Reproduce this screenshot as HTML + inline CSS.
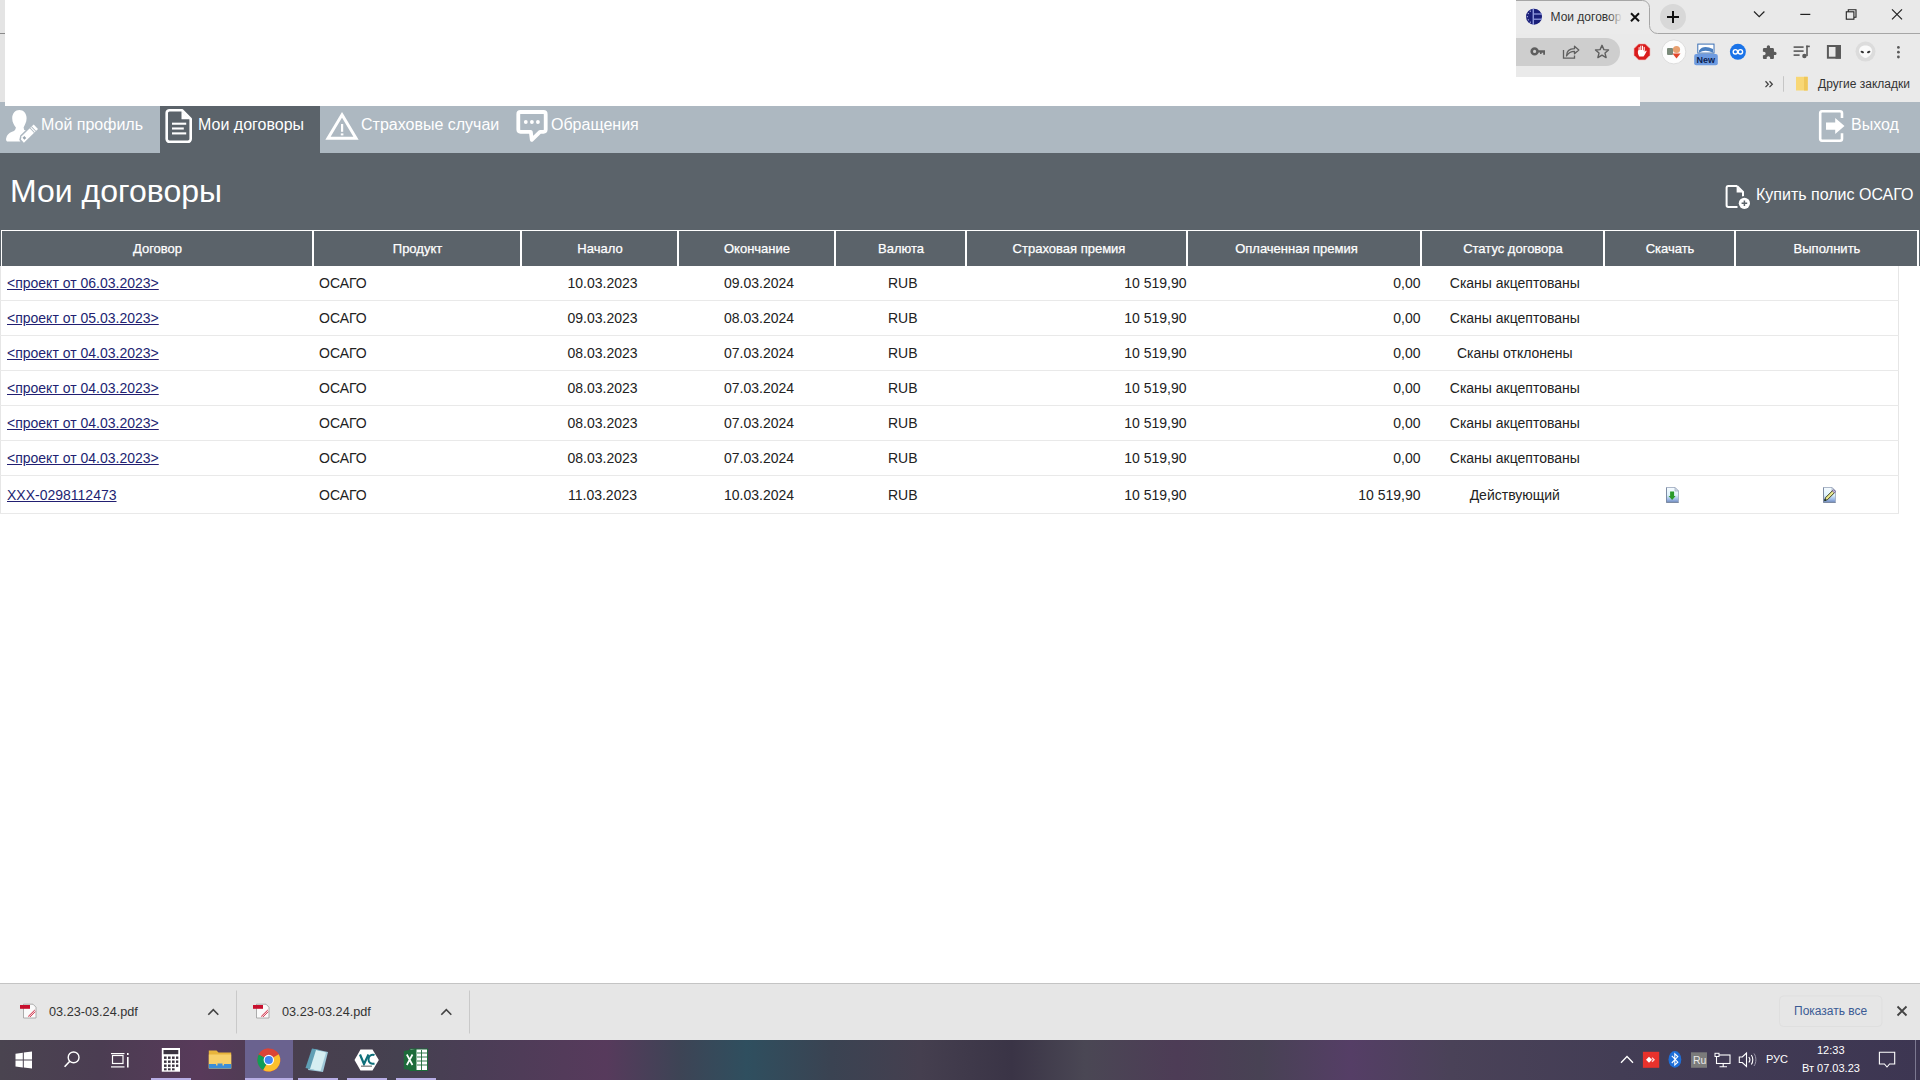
<!DOCTYPE html>
<html><head><meta charset="utf-8">
<style>
*{box-sizing:border-box}
html,body{margin:0;padding:0;width:1920px;height:1080px;overflow:hidden;background:#fff;font-family:"Liberation Sans",sans-serif}
.abs{position:absolute}
#leftstrip{left:0;top:0;width:5px;height:103px;background:#e4e4e4}
#leftstrip i{position:absolute;left:0;top:33px;width:5px;height:1px;background:#8a8a8a}
#chrome{left:1516px;top:0;width:404px;height:102px;background:#e8e8e8}
#nav{left:0;top:102px;width:1920px;height:51px;background:#adb8c1;color:#fff;font-size:16px}
#whitecover{left:5px;top:0;width:1511px;height:106px;background:#fff}
#whitebox{left:1516px;top:77px;width:124px;height:29px;background:#fff}
#hdr{left:0;top:153px;width:1920px;height:113px;background:#5b636a;color:#fff}
.navt{position:absolute;top:115px;height:20px;line-height:20px;font-size:16px;color:#fff;white-space:nowrap}
#tab-active{left:160px;top:106px;width:160px;height:47px;background:#5b636a}
#title{left:10px;top:171px;font-size:32px;line-height:40px;color:#fff;white-space:nowrap}
#buy{left:1724px;top:183px;font-size:16px;color:#fff;white-space:nowrap}
.th{position:absolute;top:231px;height:35px;line-height:35px;text-align:center;font-size:13px;color:#fff;white-space:nowrap;-webkit-text-stroke:0.25px #fff}
.td{position:absolute;font-size:14px;line-height:16px;color:#222;white-space:nowrap}
.td.c{text-align:center}.td.r{text-align:right}
.lnk{color:#221f72;text-decoration:underline}
#dl{left:0;top:983px;width:1920px;height:57px;background:#e6e6e6;border-top:1px solid #c9c9c9}
#task{left:0;top:1040px;width:1920px;height:40px;background:linear-gradient(90deg,#3d3245 0%,#4a3450 8%,#54385a 14%,#46385a 20%,#3b3a52 30%,#2f4658 38%,#34404f 45%,#3b3644 50%,#4a4654 56%,#4a3c56 62%,#4c3a5e 70%,#483e58 78%,#433d55 86%,#3f3954 100%)}
</style></head><body>
<div id="leftstrip" class="abs"><i></i></div>
<div id="nav" class="abs"></div>
<div id="whitecover" class="abs"></div>
<div class="abs" style="left:1516px;top:0;width:404px;height:102px;background:#e9e9e9;overflow:hidden">
<svg class="abs" style="left:0;top:0" width="404" height="102" viewBox="1516 0 404 102">
 <rect x="1516" y="34" width="404" height="68" fill="#eaeaea"/>
 <path d="M1516 0.5 H1642.5 A7 7 0 0 1 1649.5 7.5 V25.5 A8 8 0 0 0 1657.5 33.5 H1920 V34 H1516 Z" fill="#ebebeb"/>
 <path d="M1516 0.5 H1642.5 A7 7 0 0 1 1649.5 7.5 V25.5 A8 8 0 0 0 1657.5 33.5 H1920" fill="none" stroke="#a6a6a6" stroke-width="1"/>
 <!-- favicon -->
 <circle cx="1534" cy="16.7" r="8" fill="#1a1f7a"/>
 <rect x="1532.6" y="8.5" width="1.3" height="16.5" fill="#9aa4e6"/>
 <rect x="1534" y="13.4" width="8" height="1.2" fill="#9aa4e6"/>
 <rect x="1534" y="18.6" width="8" height="1.2" fill="#9aa4e6"/>
 <g fill="#c8ccf0"><circle cx="1528.3" cy="13.6" r="0.6"/><circle cx="1527.3" cy="16.7" r="0.6"/><circle cx="1528.3" cy="19.8" r="0.6"/><circle cx="1530.3" cy="22.2" r="0.6"/><circle cx="1530.3" cy="11.2" r="0.6"/></g>
 <!-- tab close -->
 <path d="M1631 13.2 L1639 21.2 M1639 13.2 L1631 21.2" stroke="#111" stroke-width="2"/>
 <!-- new tab button -->
 <circle cx="1673" cy="17" r="13" fill="#d8d8d8"/>
 <path d="M1667 17 H1679 M1673 11 V23" stroke="#111" stroke-width="2"/>
 <!-- window controls -->
 <path d="M1754 11.5 L1759.2 16.7 L1764.4 11.5" fill="none" stroke="#222" stroke-width="1.2"/>
 <rect x="1800.3" y="13.8" width="10" height="1.2" fill="#222"/>
 <rect x="1846.3" y="11.8" width="7.6" height="7.4" fill="none" stroke="#222" stroke-width="1.1"/>
 <path d="M1848.3 11.8 V9.7 H1856 V17.2 H1853.9" fill="none" stroke="#222" stroke-width="1.1"/>
 <path d="M1892 9.3 L1902 19.3 M1902 9.3 L1892 19.3" stroke="#222" stroke-width="1.2"/>
 <!-- address pill -->
 <path d="M1516 38 H1606 A14 14 0 0 1 1606 66 H1516 Z" fill="#cecece"/>
 <!-- key -->
 <circle cx="1534.6" cy="51.4" r="2.9" fill="none" stroke="#5f5f5f" stroke-width="2.6"/>
 <path d="M1537 50.2 H1545 V54.8 H1543.2 V52.8 H1541.6 V54 H1540 V52.6 H1537 Z" fill="#5f5f5f"/>
 <!-- share -->
 <path d="M1563.5 50 V58.2 H1574.5 V55.5" fill="none" stroke="#5f5f5f" stroke-width="1.3"/>
 <path d="M1566.5 56 C1566.5 51 1570 48.7 1574.5 48.7 V46.2 L1578.8 50 L1574.5 53.8 V51.3 C1571 51.3 1568.5 52.5 1566.5 56 Z" fill="none" stroke="#5f5f5f" stroke-width="1.3" stroke-linejoin="round"/>
 <!-- star -->
 <path d="M1602 45.3 L1603.9 49.6 L1608.5 50 L1605 53.1 L1606.1 57.6 L1602 55.2 L1597.9 57.6 L1599 53.1 L1595.5 50 L1600.1 49.6 Z" fill="none" stroke="#5f5f5f" stroke-width="1.4" stroke-linejoin="round"/>
 <!-- adblock octagon -->
 <path d="M1638.7 43.9 H1645.3 L1650 48.6 V55.2 L1645.3 59.9 H1638.7 L1634 55.2 V48.6 Z" fill="#d91c1c" stroke="#f3b0b0" stroke-width="0.6"/>
 <path d="M1639.3 56.5 C1638 54.5 1637.6 52.5 1638 50.5 L1638.6 50.2 V47.2 L1639.6 47 V50 L1640.3 50 V45.8 L1641.3 45.6 V50 L1642 50 V45.7 L1643 45.8 V50.2 L1643.7 50.3 V46.8 L1644.7 47 V52 L1646 50.5 L1646.7 51 C1645.5 53.5 1644.5 55.5 1643.5 56.5 Z" fill="#fff"/>
 <!-- white circle ext -->
 <circle cx="1673.8" cy="51.9" r="12" fill="#fdfdfd"/>
 <circle cx="1673.8" cy="51.9" r="12" fill="none" stroke="#d6d6d6" stroke-width="0.8"/>
 <rect x="1667" y="48" width="6" height="7" rx="1" fill="#7a8a7a"/>
 <circle cx="1676.5" cy="49.5" r="3.6" fill="#e8a070"/>
 <path d="M1672.5 53.5 H1680.5 L1676.5 58.5 Z" fill="#e2452a"/>
 <!-- New badge ext -->
 <rect x="1697.8" y="44.1" width="16.2" height="9" fill="#fff" stroke="#3a6fb5" stroke-width="1"/>
 <path d="M1699 50.5 C1702 46 1707 46 1713 49 V52.8 C1708 50 1703 50 1699 52.8 Z" fill="#4a7fc0"/>
 <rect x="1694.2" y="54" width="23.6" height="11.3" rx="2" fill="#6e9be0"/>
 <!-- blue infinity -->
 <circle cx="1737.9" cy="51.8" r="8" fill="#1a73e8"/>
 <circle cx="1735.4" cy="51.8" r="2.2" fill="none" stroke="#fff" stroke-width="1.4"/>
 <circle cx="1740.4" cy="51.8" r="2.2" fill="none" stroke="#fff" stroke-width="1.4"/>
 <!-- puzzle -->
 <path transform="translate(1761.6 44.7) scale(0.65)" d="M20.5 11H19V7c0-1.1-.9-2-2-2h-4V3.5C13 2.12 11.88 1 10.5 1S8 2.12 8 3.5V5H4c-1.1 0-1.99.9-1.99 2v3.8H3.5c1.49 0 2.7 1.21 2.7 2.7s-1.21 2.7-2.7 2.7H2V20c0 1.1.9 2 2 2h3.8v-1.5c0-1.490 1.21-2.7 2.7-2.7 1.49 0 2.7 1.21 2.7 2.7V22H17c1.1 0 2-.9 2-2v-4h1.5c1.38 0 2.5-1.12 2.5-2.5S21.88 11 20.5 11z" fill="#5a5a5a"/>
 <!-- playlist -->
 <g fill="#5a5a5a">
  <rect x="1793.6" y="46.3" width="10" height="1.6"/>
  <rect x="1793.6" y="50.3" width="10" height="1.6"/>
  <rect x="1793.6" y="54.3" width="6" height="1.6"/>
  <rect x="1806.2" y="45.6" width="1.6" height="10.5"/>
  <rect x="1806.2" y="45.6" width="3.6" height="1.6"/>
  <circle cx="1804.4" cy="56" r="2.2"/>
 </g>
 <!-- side panel -->
 <rect x="1827.9" y="46" width="12" height="11.7" fill="none" stroke="#5a5a5a" stroke-width="2"/>
 <rect x="1835.5" y="45" width="5.4" height="13.7" fill="#5a5a5a"/>
 <!-- alien avatar -->
 <circle cx="1865.5" cy="51.6" r="10" fill="#dcdcdc"/>
 <path d="M1865.5 45.5 C1870 45.5 1872 48 1872 51 C1872 54.5 1868 57.5 1865.5 58 C1863 57.5 1859 54.5 1859 51 C1859 48 1861 45.5 1865.5 45.5 Z" fill="#fafafa"/>
 <ellipse cx="1862.3" cy="52" rx="1.8" ry="1" fill="#333" transform="rotate(20 1862.3 52)"/>
 <ellipse cx="1868.7" cy="52" rx="1.8" ry="1" fill="#333" transform="rotate(-20 1868.7 52)"/>
 <!-- kebab -->
 <g fill="#5a5a5a"><circle cx="1898.4" cy="47.4" r="1.4"/><circle cx="1898.4" cy="52.2" r="1.4"/><circle cx="1898.4" cy="57" r="1.4"/></g>
 <!-- bookmarks bar -->
 <path d="M1765.5 81.3 L1768.3 84.2 L1765.5 87.1 M1769.5 81.3 L1772.3 84.2 L1769.5 87.1" fill="none" stroke="#444" stroke-width="1.3"/>
 <rect x="1783" y="76.2" width="1" height="15.5" fill="#c6c6c6"/>
 <rect x="1796" y="76.8" width="11.7" height="13.7" fill="#f8d775"/>
 <rect x="1804" y="76.8" width="3.7" height="13.7" fill="#efc75a"/>
</svg>
<div class="abs" style="left:34.5px;top:9px;font-size:12px;line-height:16px;color:#333;white-space:nowrap;width:72px;overflow:hidden">Мои договоры</div>
<div class="abs" style="left:92px;top:9px;width:16px;height:16px;background:linear-gradient(90deg,rgba(235,235,235,0),#ebebeb 90%)"></div>
<div class="abs" style="left:180.5px;top:55px;font-size:9px;font-weight:bold;line-height:11px;color:#0c1e50;white-space:nowrap">New</div>
<div class="abs" style="left:302px;top:76px;font-size:12px;line-height:16px;color:#333;white-space:nowrap">Другие закладки</div>
</div>
<div class="abs" style="left:1516px;top:77px;width:124px;height:29px;background:#fff"></div>

<div id="tab-active" class="abs"></div>
<div id="hdr" class="abs"></div>
<div id="title" class="abs">Мои договоры</div>
<div class="navt" style="left:41px">Мой профиль</div>
<div class="navt" style="left:198px">Мои договоры</div>
<div class="navt" style="left:361px">Страховые случаи</div>
<div class="navt" style="left:551px">Обращения</div>
<div class="navt" style="left:1851px">Выход</div>
<div class="abs" style="left:1756px;top:185px;font-size:16px;line-height:20px;color:#fff;white-space:nowrap">Купить полис ОСАГО</div>
<svg class="abs" style="left:0;top:0" width="1920" height="230" viewBox="0 0 1920 230">
 <!-- person -->
 <path fill="#fff" d="M19.4 110 C23.5 110 26.6 113.5 26.6 118.2 C26.6 122.5 24.5 125 23.6 127.5 L24.2 130 C27 130.5 29 131 31 132.5 L20 141.6 L8 141.6 C6.5 141.6 5.8 140.5 6.1 138.5 C6.8 135 9 133 12 131.8 C14 131 15.5 130.5 15.9 127.5 C14.2 125 12.2 122.5 12.2 118.2 C12.2 113.5 15.3 110 19.4 110 Z"/>
 <g transform="translate(21.6 140.6) rotate(-44)">
  <path d="M0.2 -1.2 L3 -3.1 H19.8 V3.1 H0.2 Z" fill="#fff" stroke="#adb8c1" stroke-width="3" paint-order="stroke"/>
  <rect x="14.3" y="-3.2" width="0.9" height="6.4" fill="#adb8c1"/>
  <rect x="16.3" y="-3.2" width="0.9" height="6.4" fill="#adb8c1"/>
  <rect x="2.6" y="-1.3" width="2.6" height="2.6" fill="#9aa6b0"/>
 </g>
 <!-- document (active) -->
 <path d="M169.5 110.2 H182 L190.7 118.8 V139 A2.8 2.8 0 0 1 187.9 141.8 H169.5 A2.8 2.8 0 0 1 166.7 139 V113 A2.8 2.8 0 0 1 169.5 110.2 Z" fill="none" stroke="#fff" stroke-width="2.6" stroke-linejoin="round"/>
 <path d="M181.5 111 V119.3 H190" fill="#fff"/>
 <g stroke="#fff" stroke-width="2.1">
  <line x1="172" y1="123.7" x2="186.2" y2="123.7"/>
  <line x1="172" y1="128.5" x2="183.8" y2="128.5"/>
  <line x1="172" y1="133.4" x2="186.2" y2="133.4"/>
 </g>
 <!-- warning -->
 <path d="M342 114.8 L356 138.2 H328 Z" fill="none" stroke="#fff" stroke-width="3" stroke-linejoin="miter"/>
 <rect x="341" y="124" width="2.2" height="7.8" fill="#fff"/>
 <rect x="340.8" y="133.4" width="2.6" height="2" fill="#fff"/>
 <!-- chat -->
 <path d="M520.5 112 H543.5 A2.2 2.2 0 0 1 545.7 114.2 V129.6 A2.2 2.2 0 0 1 543.5 131.8 H540 L531.8 139.8 L530.8 131.8 H520.5 A2.2 2.2 0 0 1 518.3 129.6 V114.2 A2.2 2.2 0 0 1 520.5 112 Z" fill="none" stroke="#fff" stroke-width="3.8" stroke-linejoin="round"/>
 <circle cx="525.8" cy="122" r="1.9" fill="#fff"/>
 <circle cx="531.9" cy="122" r="1.9" fill="#fff"/>
 <circle cx="537.9" cy="122" r="1.9" fill="#fff"/>
 <!-- exit -->
 <path d="M1842 118 V113.2 A2 2 0 0 0 1840 111.2 H1822 A2 2 0 0 0 1820.2 113.2 V138.8 A2 2 0 0 0 1822 140.8 H1840 A2 2 0 0 0 1842 138.8 V133.2" fill="none" stroke="#fff" stroke-width="2.6"/>
 <path d="M1826 122.5 H1835.2 V117.9 L1844.5 126 L1835.2 134 V129.7 H1826 Z" fill="#fff"/>
 <!-- buy doc -->
 <path d="M1737 186 H1728.3 A1.8 1.8 0 0 0 1726.6 187.8 V205.2 A1.8 1.8 0 0 0 1728.3 207 H1737.5 M1743 198 V192 L1737 186" fill="none" stroke="#fff" stroke-width="2"/>
 <path d="M1736.6 186.5 V192.6 H1742.8 Z" fill="#fff"/>
 <circle cx="1744.4" cy="203.3" r="7.2" fill="#5b636a"/>
 <circle cx="1744.4" cy="203.3" r="5.6" fill="#fff"/>
 <path d="M1744.4 200.5 V206.1 M1741.6 203.3 H1747.2" stroke="#5b636a" stroke-width="1.5"/>
</svg>

<div class="abs" style="left:1px;top:230px;width:1917px;height:1px;background:#fff"></div>
<div class="abs" style="left:1px;top:230px;width:1px;height:36px;background:#fff"></div>
<div class="abs" style="left:312px;top:230px;width:2px;height:36px;background:#fff"></div>
<div class="abs" style="left:520px;top:230px;width:2px;height:36px;background:#fff"></div>
<div class="abs" style="left:677px;top:230px;width:2px;height:36px;background:#fff"></div>
<div class="abs" style="left:834px;top:230px;width:2px;height:36px;background:#fff"></div>
<div class="abs" style="left:965px;top:230px;width:2px;height:36px;background:#fff"></div>
<div class="abs" style="left:1186px;top:230px;width:2px;height:36px;background:#fff"></div>
<div class="abs" style="left:1420px;top:230px;width:2px;height:36px;background:#fff"></div>
<div class="abs" style="left:1603px;top:230px;width:2px;height:36px;background:#fff"></div>
<div class="abs" style="left:1734px;top:230px;width:2px;height:36px;background:#fff"></div>
<div class="abs" style="left:1917px;top:230px;width:2px;height:36px;background:#fff"></div>
<div class="th" style="left:2px;width:311px">Договор</div>
<div class="th" style="left:314px;width:207px">Продукт</div>
<div class="th" style="left:522px;width:156px">Начало</div>
<div class="th" style="left:679px;width:156px">Окончание</div>
<div class="th" style="left:836px;width:130px">Валюта</div>
<div class="th" style="left:959px;width:220px">Страховая премия</div>
<div class="th" style="left:1180px;width:233px">Оплаченная премия</div>
<div class="th" style="left:1422px;width:182px">Статус договора</div>
<div class="th" style="left:1605px;width:130px">Скачать</div>
<div class="th" style="left:1736px;width:182px">Выполнить</div>
<div class="abs" style="left:0px;top:266px;width:1px;height:248px;background:#e6e6e6"></div>
<div class="abs" style="left:1898px;top:266px;width:1px;height:248px;background:#e6e6e6"></div>
<div class="abs" style="left:0px;top:300px;width:1899px;height:1px;background:#e9e9e9"></div>
<div class="abs" style="left:0px;top:335px;width:1899px;height:1px;background:#e9e9e9"></div>
<div class="abs" style="left:0px;top:370px;width:1899px;height:1px;background:#e9e9e9"></div>
<div class="abs" style="left:0px;top:405px;width:1899px;height:1px;background:#e9e9e9"></div>
<div class="abs" style="left:0px;top:440px;width:1899px;height:1px;background:#e9e9e9"></div>
<div class="abs" style="left:0px;top:475px;width:1899px;height:1px;background:#e9e9e9"></div>
<div class="abs" style="left:0px;top:513px;width:1899px;height:1px;background:#e9e9e9"></div>
<div class="td lnk" style="top:275px;left:7px">&lt;проект от 06.03.2023&gt;</div>
<div class="td" style="top:275px;left:319px">ОСАГО</div>
<div class="td c" style="top:275px;left:542.5px;width:120px">10.03.2023</div>
<div class="td c" style="top:275px;left:699px;width:120px">09.03.2024</div>
<div class="td c" style="top:275px;left:842.7px;width:120px">RUB</div>
<div class="td r" style="top:275px;left:1026.5px;width:160px">10 519,90</div>
<div class="td r" style="top:275px;left:1260.5px;width:160px">0,00</div>
<div class="td c" style="top:275px;left:1414.8px;width:200px">Сканы акцептованы</div>
<div class="td lnk" style="top:310px;left:7px">&lt;проект от 05.03.2023&gt;</div>
<div class="td" style="top:310px;left:319px">ОСАГО</div>
<div class="td c" style="top:310px;left:542.5px;width:120px">09.03.2023</div>
<div class="td c" style="top:310px;left:699px;width:120px">08.03.2024</div>
<div class="td c" style="top:310px;left:842.7px;width:120px">RUB</div>
<div class="td r" style="top:310px;left:1026.5px;width:160px">10 519,90</div>
<div class="td r" style="top:310px;left:1260.5px;width:160px">0,00</div>
<div class="td c" style="top:310px;left:1414.8px;width:200px">Сканы акцептованы</div>
<div class="td lnk" style="top:345px;left:7px">&lt;проект от 04.03.2023&gt;</div>
<div class="td" style="top:345px;left:319px">ОСАГО</div>
<div class="td c" style="top:345px;left:542.5px;width:120px">08.03.2023</div>
<div class="td c" style="top:345px;left:699px;width:120px">07.03.2024</div>
<div class="td c" style="top:345px;left:842.7px;width:120px">RUB</div>
<div class="td r" style="top:345px;left:1026.5px;width:160px">10 519,90</div>
<div class="td r" style="top:345px;left:1260.5px;width:160px">0,00</div>
<div class="td c" style="top:345px;left:1414.8px;width:200px">Сканы отклонены</div>
<div class="td lnk" style="top:380px;left:7px">&lt;проект от 04.03.2023&gt;</div>
<div class="td" style="top:380px;left:319px">ОСАГО</div>
<div class="td c" style="top:380px;left:542.5px;width:120px">08.03.2023</div>
<div class="td c" style="top:380px;left:699px;width:120px">07.03.2024</div>
<div class="td c" style="top:380px;left:842.7px;width:120px">RUB</div>
<div class="td r" style="top:380px;left:1026.5px;width:160px">10 519,90</div>
<div class="td r" style="top:380px;left:1260.5px;width:160px">0,00</div>
<div class="td c" style="top:380px;left:1414.8px;width:200px">Сканы акцептованы</div>
<div class="td lnk" style="top:415px;left:7px">&lt;проект от 04.03.2023&gt;</div>
<div class="td" style="top:415px;left:319px">ОСАГО</div>
<div class="td c" style="top:415px;left:542.5px;width:120px">08.03.2023</div>
<div class="td c" style="top:415px;left:699px;width:120px">07.03.2024</div>
<div class="td c" style="top:415px;left:842.7px;width:120px">RUB</div>
<div class="td r" style="top:415px;left:1026.5px;width:160px">10 519,90</div>
<div class="td r" style="top:415px;left:1260.5px;width:160px">0,00</div>
<div class="td c" style="top:415px;left:1414.8px;width:200px">Сканы акцептованы</div>
<div class="td lnk" style="top:450px;left:7px">&lt;проект от 04.03.2023&gt;</div>
<div class="td" style="top:450px;left:319px">ОСАГО</div>
<div class="td c" style="top:450px;left:542.5px;width:120px">08.03.2023</div>
<div class="td c" style="top:450px;left:699px;width:120px">07.03.2024</div>
<div class="td c" style="top:450px;left:842.7px;width:120px">RUB</div>
<div class="td r" style="top:450px;left:1026.5px;width:160px">10 519,90</div>
<div class="td r" style="top:450px;left:1260.5px;width:160px">0,00</div>
<div class="td c" style="top:450px;left:1414.8px;width:200px">Сканы акцептованы</div>
<div class="td lnk" style="top:487px;left:7px">XXX-0298112473</div>
<div class="td" style="top:487px;left:319px">ОСАГО</div>
<div class="td c" style="top:487px;left:542.5px;width:120px">11.03.2023</div>
<div class="td c" style="top:487px;left:699px;width:120px">10.03.2024</div>
<div class="td c" style="top:487px;left:842.7px;width:120px">RUB</div>
<div class="td r" style="top:487px;left:1026.5px;width:160px">10 519,90</div>
<div class="td r" style="top:487px;left:1260.5px;width:160px">10 519,90</div>
<div class="td c" style="top:487px;left:1414.8px;width:200px">Действующий</div>
<svg class="abs" style="left:1666px;top:487px" width="13" height="16" viewBox="0 0 13 16"><defs><linearGradient id="pg1" x1="0" y1="0" x2="0" y2="1"><stop offset="0" stop-color="#f6fbff"/><stop offset="0.5" stop-color="#dff3fb"/><stop offset="0.8" stop-color="#9cb8e6"/><stop offset="1" stop-color="#6f88b8"/></linearGradient></defs><path d="M0.5 0.5H9L12.5 4V15.5H0.5Z" fill="url(#pg1)" stroke="#a4b0c4" stroke-width="0.9"/><path d="M0.5 0.5V15.5H12.5" fill="none" stroke="#7d8ba3" stroke-width="1"/><path d="M9 0.5V4H12.5Z" fill="#d6dfea" stroke="#9eabbd" stroke-width="0.7"/><path d="M4.1 4.6H8.1V9H9.6L6.1 13L2.6 9H4.1Z" fill="#2a9a2a"/></svg>
<svg class="abs" style="left:1823px;top:487px" width="13" height="16" viewBox="0 0 13 16"><defs><linearGradient id="pg2" x1="0" y1="0" x2="0" y2="1"><stop offset="0" stop-color="#f6fbff"/><stop offset="0.5" stop-color="#dff3fb"/><stop offset="0.8" stop-color="#9cb8e6"/><stop offset="1" stop-color="#6f88b8"/></linearGradient></defs><path d="M0.5 0.5H9L12.5 4V15.5H0.5Z" fill="url(#pg2)" stroke="#a4b0c4" stroke-width="0.9"/><path d="M0.5 0.5V15.5H12.5" fill="none" stroke="#7d8ba3" stroke-width="1"/><path d="M9 0.5V4H12.5Z" fill="#d6dfea" stroke="#9eabbd" stroke-width="0.7"/><path d="M1.6 13.6L2.6 10.6L9.6 3.6L11.6 5.6L4.6 12.6Z" fill="#e8e890" stroke="#2a2a10" stroke-width="0.9"/><path d="M9.3 3.9L10.6 2.6L12.6 4.6L11.3 5.9Z" fill="#c8b8e0" stroke="#6a5a8a" stroke-width="0.7"/><circle cx="2.2" cy="13" r="0.9" fill="#1a3a2a"/></svg>
<svg class="abs" style="left:0;top:983px" width="1920" height="57" viewBox="0 983 1920 57">
 <rect x="0" y="983" width="1920" height="57" fill="#e6e6e6"/>
 <rect x="0" y="983" width="1920" height="1" fill="#c4c4c4"/>
 <g id="pdf1">
  <path d="M23.5 1004.2 H33 L36 1007.2 V1018 H23.5 Z" fill="#fafafa" stroke="#9a9a9a" stroke-width="0.8"/>
  <rect x="20" y="1005" width="10" height="3.8" fill="#c8102e"/>
  <path d="M28.2 1016.5 L34.8 1010 M29.8 1017 L35.2 1011.6" stroke="#d0203a" stroke-width="1"/>
 </g>
 <use href="#pdf1" x="233"/>
 <path d="M208.3 1014.8 L213.3 1009.6 L218.3 1014.8" fill="none" stroke="#444" stroke-width="1.6"/>
 <path d="M441.3 1014.8 L446.3 1009.6 L451.3 1014.8" fill="none" stroke="#444" stroke-width="1.6"/>
 <rect x="236" y="990.5" width="1" height="43" fill="#c9c9c9"/>
 <rect x="469" y="990.5" width="1" height="43" fill="#c9c9c9"/>
 <rect x="1779.5" y="996" width="102.5" height="30.5" rx="4" fill="none" stroke="#dfdfdf" stroke-width="1"/>
 <path d="M1897.5 1006.5 L1906.5 1015.5 M1906.5 1006.5 L1897.5 1015.5" stroke="#444" stroke-width="1.8"/>
</svg>
<div class="abs" style="left:49px;top:1004px;font-size:12.7px;line-height:16px;color:#333;white-space:nowrap">03.23-03.24.pdf</div>
<div class="abs" style="left:282px;top:1004px;font-size:12.7px;line-height:16px;color:#333;white-space:nowrap">03.23-03.24.pdf</div>
<div class="abs" style="left:1794px;top:1003px;font-size:12px;line-height:16px;color:#3b5b94;white-space:nowrap">Показать все</div>
<svg class="abs" style="left:0;top:1040px" width="1920" height="40" viewBox="0 1040 1920 40">
 <defs>
  <linearGradient id="tb" x1="0" x2="1" y1="0" y2="0">
   <stop offset="0.0000" stop-color="#4a4450"/>
   <stop offset="0.0521" stop-color="#4b3d52"/>
   <stop offset="0.1042" stop-color="#583a5a"/>
   <stop offset="0.1562" stop-color="#483f4e"/>
   <stop offset="0.2083" stop-color="#454150"/>
   <stop offset="0.2500" stop-color="#4b3d56"/>
   <stop offset="0.3156" stop-color="#573a5c"/>
   <stop offset="0.3542" stop-color="#3d4455"/>
   <stop offset="0.3891" stop-color="#2f4f5f"/>
   <stop offset="0.4323" stop-color="#3a4352"/>
   <stop offset="0.4792" stop-color="#453f4f"/>
   <stop offset="0.5271" stop-color="#3a3446"/>
   <stop offset="0.5651" stop-color="#4a4754"/>
   <stop offset="0.6130" stop-color="#4d3c56"/>
   <stop offset="0.6562" stop-color="#484254"/>
   <stop offset="0.7031" stop-color="#553e66"/>
   <stop offset="0.7552" stop-color="#4a4258"/>
   <stop offset="0.8438" stop-color="#433d55"/>
   <stop offset="1.0000" stop-color="#3d3652"/>
  </linearGradient>
 </defs>
 <rect x="0" y="1040" width="1920" height="40" fill="url(#tb)"/>
 <!-- chrome active -->
 <rect x="245" y="1040" width="48" height="40" fill="#6a628f"/>
 <g fill="#b8aee6">
  <rect x="151" y="1078" width="40" height="2"/>
  <rect x="245" y="1078" width="48" height="2"/>
  <rect x="298" y="1078" width="40" height="2"/>
  <rect x="347" y="1078" width="40" height="2"/>
  <rect x="396" y="1078" width="40" height="2"/>
 </g>
 <!-- windows logo -->
 <g fill="#fff">
  <path d="M15.5 1053.8 L22.8 1052.8 V1059.6 H15.5 Z"/>
  <path d="M23.8 1052.6 L32 1051.6 V1059.6 H23.8 Z"/>
  <path d="M15.5 1060.6 H22.8 V1067.4 L15.5 1066.4 Z"/>
  <path d="M23.8 1060.6 H32 V1068.6 L23.8 1067.6 Z"/>
 </g>
 <!-- search -->
 <circle cx="73.6" cy="1057.4" r="5.4" fill="none" stroke="#fff" stroke-width="1.4"/>
 <path d="M69.8 1061.3 L64.6 1066.8" stroke="#fff" stroke-width="1.6"/>
 <!-- task view -->
 <g fill="none" stroke="#fff" stroke-width="1.2">
  <rect x="112.5" y="1055.5" width="10.5" height="8"/>
 </g>
 <g fill="#fff">
  <rect x="111" y="1053" width="13.5" height="1.2"/>
  <rect x="111" y="1066.3" width="13.5" height="1.2"/>
  <rect x="127" y="1053" width="1.6" height="2"/>
  <rect x="127" y="1057" width="1.6" height="10.5"/>
 </g>
 <!-- calculator -->
 <rect x="161.8" y="1048" width="18.2" height="23.7" fill="#fff"/>
 <rect x="163.5" y="1050" width="14.8" height="4.2" fill="#3a3340"/>
 <g fill="#3a3340">
  <rect x="164" y="1056.5" width="2.6" height="2.4"/><rect x="168" y="1056.5" width="2.6" height="2.4"/><rect x="172" y="1056.5" width="2.6" height="2.4"/><rect x="176" y="1056.5" width="2.3" height="2.4"/>
  <rect x="164" y="1060.5" width="2.6" height="2.4"/><rect x="168" y="1060.5" width="2.6" height="2.4"/><rect x="172" y="1060.5" width="2.6" height="2.4"/><rect x="176" y="1060.5" width="2.3" height="2.4"/>
  <rect x="164" y="1064.5" width="2.6" height="2.4"/><rect x="168" y="1064.5" width="2.6" height="2.4"/><rect x="172" y="1064.5" width="2.6" height="2.4"/><rect x="176" y="1064.5" width="2.3" height="2.4"/>
  <rect x="164" y="1068.3" width="2.6" height="2"/><rect x="168" y="1068.3" width="2.6" height="2"/><rect x="172" y="1068.3" width="2.6" height="2"/>
 </g>
 <!-- folder -->
 <path d="M208.8 1050.5 H216.5 L218.5 1052.5 H231.2 V1068.5 H208.8 Z" fill="#e8b43c"/>
 <rect x="208.8" y="1054.5" width="22.4" height="14" fill="#f8d06a"/>
 <path d="M208.8 1064 H231.2 V1068.5 H208.8 Z" fill="#3c8ed8"/>
 <rect x="216" y="1061.5" width="8" height="4" fill="#f8d06a"/>
 <rect x="217.5" y="1063.5" width="5" height="3" fill="#3c8ed8"/>
 <!-- chrome logo -->
 <circle cx="268.8" cy="1060" r="11.5" fill="#db4437"/>
 <path d="M268.8 1060 L278.76 1054.25 A11.5 11.5 0 0 1 263.05 1069.96 Z" fill="#fbc02d"/>
 <path d="M268.8 1060 L263.05 1069.96 A11.5 11.5 0 0 1 258.84 1054.25 Z" fill="#0f9d58"/>
 <path d="M268.8 1060 L258.84 1054.25 A11.5 11.5 0 0 1 268.8 1048.5 Z" fill="#db4437"/>
 <circle cx="268.8" cy="1060" r="5.2" fill="#fff"/>
 <circle cx="268.8" cy="1060" r="4.1" fill="#4285f4"/>
 <!-- notepad-ish -->
 <path d="M308 1070 L314 1049 L328 1052 L323 1072 Z" fill="#9fc8d8"/>
 <path d="M305.5 1068 L312 1048.5 L320 1050 L314 1070 Z" fill="#5f9fb5"/>
 <path d="M310 1069 L316 1050 L326 1052.5 L320.5 1071 Z" fill="#d5eef2"/>
 <!-- VC -->
 <path d="M360.5 1049.5 H372.5 L378.8 1060 L372.5 1070.5 H360.5 L354.5 1060 Z" fill="#fff"/>
 <path d="M360 1054.5 L364 1064 L368.5 1054.5" fill="none" stroke="#0f6f7a" stroke-width="2.2"/>
 <path d="M374.5 1055 C371.5 1053.8 368.5 1056 368.5 1059.5 C368.5 1063 371.5 1064.5 374.5 1063.5" fill="none" stroke="#0f6f7a" stroke-width="2"/>
 <rect x="361" y="1065.5" width="11" height="1.4" fill="#888"/>
 <!-- excel -->
 <rect x="410" y="1049" width="17.5" height="21.5" fill="#fff" stroke="#1d6b3a" stroke-width="1"/>
 <g stroke="#1d6b3a" stroke-width="0.9"><path d="M417 1053 H427 M417 1057 H427 M417 1061 H427 M417 1065 H427 M421.5 1050 V1070"/></g>
 <path d="M403.8 1051 L416.5 1048.8 V1071 L403.8 1069 Z" fill="#1d6b3a"/>
 <path d="M406.8 1054.5 L412.5 1065 M412.5 1054.5 L406.8 1065" stroke="#fff" stroke-width="1.7"/>
 <!-- tray -->
 <path d="M1621 1062.8 L1627 1056.5 L1633 1062.8" fill="none" stroke="#fff" stroke-width="1.3"/>
 <rect x="1642.9" y="1051.8" width="16.3" height="16" fill="#e8322c"/>
 <path d="M1646 1059.8 L1649 1056.8 L1652 1059.8 L1649 1062.8 Z" fill="#fff"/>
 <path d="M1652.5 1057.3 L1655 1059.8 L1652.5 1062.3 L1651.5 1061.3 L1653 1059.8 L1651.5 1058.3 Z" fill="#ffd0d0"/>
 <ellipse cx="1674.9" cy="1059.4" rx="6.4" ry="8.3" fill="#1e6fd9"/>
 <path d="M1671.8 1055.8 L1677.8 1062.2 L1674.8 1065 V1053.8 L1677.8 1056.6 L1671.8 1063" fill="none" stroke="#fff" stroke-width="1.1"/>
 <rect x="1691" y="1052.3" width="16" height="15.5" fill="#7b7b7b"/>
 <g fill="none" stroke="#fff" stroke-width="1.1">
  <rect x="1716.5" y="1055" width="13.5" height="8.5"/>
  <path d="M1723.2 1063.5 V1066.5 M1719.5 1066.8 H1727"/>
 </g>
 <rect x="1715" y="1053.3" width="4" height="3.2" fill="#3e3855" stroke="#fff" stroke-width="1"/>
 <path d="M1739.3 1057 H1742.3 L1746.5 1053 V1066.5 L1742.3 1062.5 H1739.3 Z" fill="none" stroke="#fff" stroke-width="1.1"/>
 <path d="M1748.8 1057 C1750 1058.5 1750 1061 1748.8 1062.5 M1751.3 1055 C1753.3 1057.5 1753.3 1062 1751.3 1064.5" fill="none" stroke="#fff" stroke-width="1.1"/>
 <path d="M1754 1053.5 C1756.5 1057 1756.5 1062.5 1754 1066" fill="none" stroke="#9a96a8" stroke-width="1"/>
 <path d="M1879.4 1052.3 H1894.7 V1064 H1889.6 L1887 1067 L1884.4 1064 H1879.4 Z" fill="none" stroke="#fff" stroke-width="1.1"/>
 <rect x="1915" y="1040" width="1" height="40" fill="#7c7890"/>
</svg>
<div class="abs" style="left:1693px;top:1053px;font-size:10.5px;line-height:14px;color:#e8e8e8;white-space:nowrap">Ru</div>
<div class="abs" style="left:1766px;top:1052px;font-size:11px;line-height:14px;color:#fff;white-space:nowrap">РУС</div>
<div class="abs" style="left:1817px;top:1043px;font-size:11px;line-height:14px;color:#fff;white-space:nowrap">12:33</div>
<div class="abs" style="left:1802px;top:1061px;font-size:11px;line-height:14px;color:#fff;white-space:nowrap">Вт 07.03.23</div>

</body></html>
